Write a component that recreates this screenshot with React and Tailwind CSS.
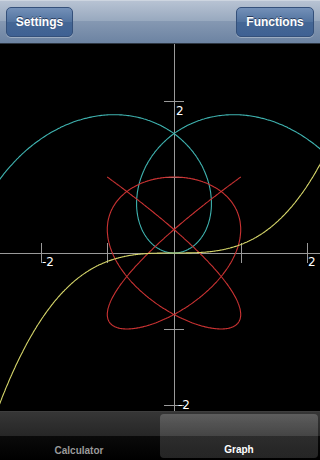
import { useMemo } from 'react';

const OX = 174;
const OY = 209;
const SX = 66.7;
const SY = 76;

function px(x, y) {
  return `${(OX + x * SX).toFixed(1)},${(OY - y * SY).toFixed(1)}`;
}

function buildPath(fn, from, to, steps) {
  const pts = [];
  for (let i = 0; i <= steps; i++) {
    const t = from + ((to - from) * i) / steps;
    const [x, y] = fn(t);
    pts.push(px(x, y));
  }
  return 'M' + pts.join(' L');
}

function Graph() {
  const curves = useMemo(() => ({
    spiral: buildPath(t => [t * Math.cos(t), t * Math.sin(t)], -3.3, 3.3, 700),
    lissajous: buildPath(t => [Math.cos(5 * t), Math.cos(4 * t)], 0, Math.PI, 900),
    cubic: buildPath(x => [x, (x * x * x) / 9], -2.75, 2.35, 500),
  }), []);

  const xTicks = [-2, -1, 1, 2];
  const yTicks = [-2, -1, 1, 2];

  return (
    <svg width="320" height="367" viewBox="0 0 320 367" className="block">
      <rect width="320" height="367" fill="#000" />
      <g stroke="#9a9a9a" strokeWidth="1" shapeRendering="crispEdges">
        <line x1="0" y1={OY + 0.5} x2="320" y2={OY + 0.5} />
        <line x1={OX + 0.5} y1="0" x2={OX + 0.5} y2="367" />
        {xTicks.map(v => {
          const x = Math.round(OX + v * SX) + 0.5;
          return <line key={'x' + v} x1={x} y1={OY - 10} x2={x} y2={OY + 10} />;
        })}
        {yTicks.map(v => {
          const y = Math.round(OY - v * SY) + 0.5;
          return <line key={'y' + v} x1={OX - 10} y1={y} x2={OX + 10} y2={y} />;
        })}
      </g>
      <g fill="none" strokeWidth="1.1">
        <path d={curves.spiral} stroke="#3fb3b0" />
        <path d={curves.lissajous} stroke="#cc3333" />
        <path d={curves.cubic} stroke="#d6d66a" />
      </g>
      <g fill="#fff" fontSize="12" style={{ fontFamily: '"DejaVu Sans", sans-serif' }}>
        <text x="42" y="222">-2</text>
        <text x="308" y="222">2</text>
        <text x="176" y="71">2</text>
        <text x="178" y="365">-2</text>
      </g>
    </svg>
  );
}

export default function App() {
  return (
    <div className="w-[320px] h-[460px] flex flex-col bg-black overflow-hidden" style={{ fontFamily: '"Liberation Sans", Arial, sans-serif' }}>
      <div className="h-[44px] flex items-center justify-between pl-[6px] pr-[6px] pt-[1px] border-b border-[#2d3642] bg-[linear-gradient(to_bottom,#b9c4d4,#97a8be_50%,#8598b2_50%,#6c83a2)] shadow-[inset_0_1px_0_#cdd5e0]">
        <button className="w-[67px] h-[30px] rounded-[5px] border border-[#34507a] bg-[linear-gradient(to_bottom,#7390b8,#52739f_50%,#456795_50%,#3f6193)] text-white text-[12px] font-bold [text-shadow:0_-1px_0_#2b3e5e] shadow-[0_1px_0_rgba(255,255,255,0.3)]">
          Settings
        </button>
        <button className="w-[78px] h-[30px] rounded-[5px] border border-[#34507a] bg-[linear-gradient(to_bottom,#7390b8,#52739f_50%,#456795_50%,#3f6193)] text-white text-[12px] font-bold [text-shadow:0_-1px_0_#2b3e5e] shadow-[0_1px_0_rgba(255,255,255,0.3)]">
          Functions
        </button>
      </div>
      <Graph />
      <div className="h-[49px] flex border-t border-[#3e3e3e] bg-[linear-gradient(to_bottom,#363636,#262626_50%,#0a0a0a_50%,#000)]">
        <div className="flex-1 flex flex-col justify-end items-center pb-[2px]">
          <span className="text-[10px] font-bold text-[#9a9a9a]">Calculator</span>
        </div>
        <div className="flex-1 p-[2px]">
          <div className="h-full rounded-[4px] flex flex-col justify-end items-center pb-[1px] bg-[linear-gradient(to_bottom,rgba(255,255,255,0.2),rgba(255,255,255,0.14)_50%,rgba(255,255,255,0.14)_50%,rgba(255,255,255,0.14))]">
            <span className="text-[10px] font-bold text-white">Graph</span>
          </div>
        </div>
      </div>
    </div>
  );
}
